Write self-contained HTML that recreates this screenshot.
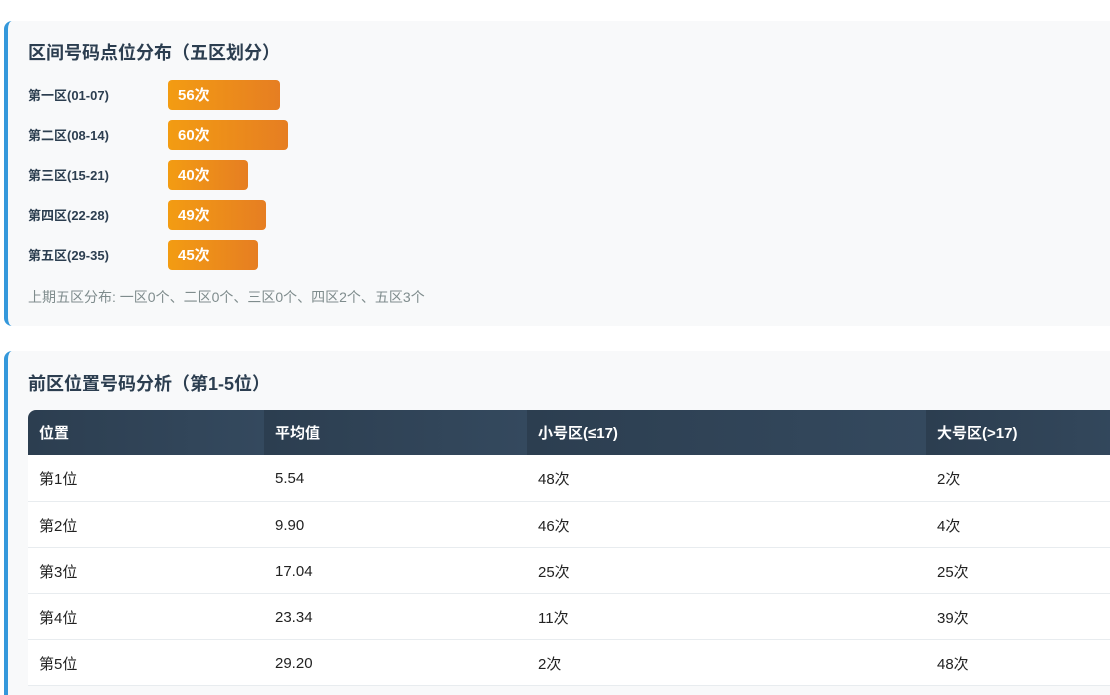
<!DOCTYPE html>
<html><head><meta charset="utf-8"><style>
html,body{margin:0;height:695px;overflow:hidden}
body{background:#fff;font-family:"Liberation Sans","Noto Sans CJK SC",sans-serif;width:1110px;position:relative}
.card{position:absolute;left:4px;width:1130px;background:#f8f9fa;border-left:4px solid #3498db;border-radius:8px;box-sizing:border-box}
h3{position:absolute;left:20px;margin:0;font-size:18px;font-weight:bold;color:#2c3e50;line-height:24px}
.lab{position:absolute;left:20px;font-size:13px;font-weight:bold;color:#2c3e50;line-height:30px}
.bar{position:absolute;left:160px;height:30px;border-radius:4px;background:linear-gradient(90deg,#f39c12,#e67e22);color:#fff;font-weight:bold;font-size:15px;line-height:32px;padding-left:10px;box-sizing:border-box}
.note{position:absolute;left:20px;top:266px;font-size:14px;color:#7f8c8d}
table{position:absolute;left:20px;top:59px;border-collapse:collapse;width:1120px;font-size:15px;color:#222}
th{background:linear-gradient(90deg,#2c3e50,#34495e);color:#fff;text-align:left;height:45px;padding:0 0 0 11px;font-weight:bold}
th:first-child{border-top-left-radius:8px}
td{background:#fff;height:46px;padding:2px 0 0 11px;border-bottom:1px solid #e8ecef;box-sizing:border-box}
</style></head><body>
<div class="card" style="top:21px;height:305px">
<h3 style="top:20px">区间号码点位分布（五区划分）</h3>
<div class="lab" style="top:60px">第一区(01-07)</div><div class="bar" style="top:59px;width:112px">56次</div>
<div class="lab" style="top:100px">第二区(08-14)</div><div class="bar" style="top:99px;width:120px">60次</div>
<div class="lab" style="top:140px">第三区(15-21)</div><div class="bar" style="top:139px;width:80px">40次</div>
<div class="lab" style="top:180px">第四区(22-28)</div><div class="bar" style="top:179px;width:98px">49次</div>
<div class="lab" style="top:220px">第五区(29-35)</div><div class="bar" style="top:219px;width:90px">45次</div>
<div class="note">上期五区分布: 一区0个、二区0个、三区0个、四区2个、五区3个</div>
</div>
<div class="card" style="top:351px;height:360px">
<h3 style="top:21px">前区位置号码分析（第1-5位）</h3>
<table>
<tr><th style="width:225px">位置</th><th style="width:252px">平均值</th><th style="width:388px">小号区(≤17)</th><th>大号区(&gt;17)</th></tr>
<tr><td>第1位</td><td>5.54</td><td>48次</td><td>2次</td></tr>
<tr><td>第2位</td><td>9.90</td><td>46次</td><td>4次</td></tr>
<tr><td>第3位</td><td>17.04</td><td>25次</td><td>25次</td></tr>
<tr><td>第4位</td><td>23.34</td><td>11次</td><td>39次</td></tr>
<tr><td>第5位</td><td>29.20</td><td>2次</td><td>48次</td></tr>
</table>
</div>
</body></html>
